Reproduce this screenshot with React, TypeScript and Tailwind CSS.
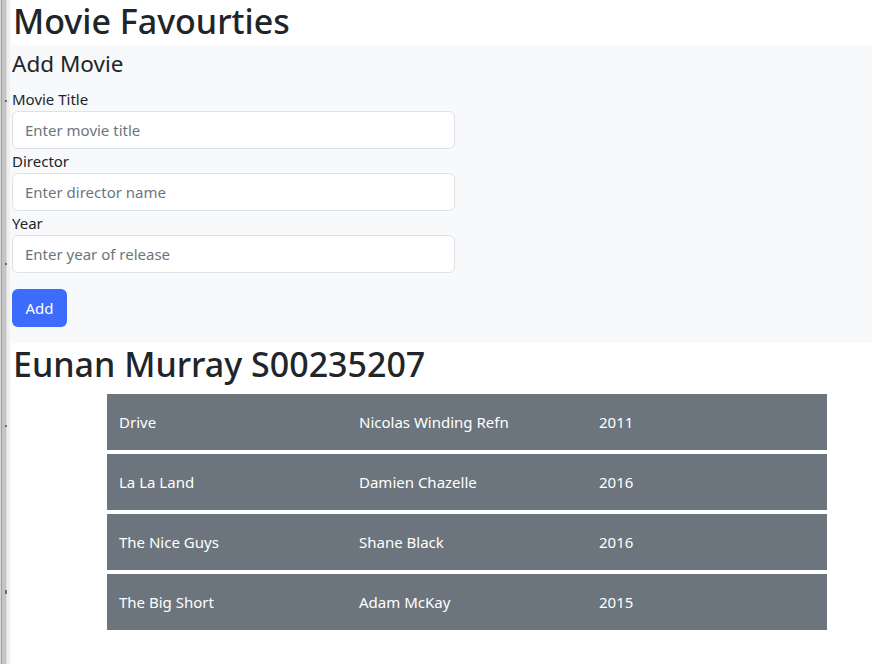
import React, { useState } from 'react';

interface Movie {
  title: string;
  director: string;
  year: string;
}

const movies: Movie[] = [
  { title: 'Drive', director: 'Nicolas Winding Refn', year: '2011' },
  { title: 'La La Land', director: 'Damien Chazelle', year: '2016' },
  { title: 'The Nice Guys', director: 'Shane Black', year: '2016' },
  { title: 'The Big Short', director: 'Adam McKay', year: '2015' },
];

const Field = ({ label, placeholder }: { label: string; placeholder: string }) => (
  <div>
    <label className="block text-[15px] leading-[24px] text-[#212529]">{label}</label>
    <input
      type="text"
      placeholder={placeholder}
      className="w-[443px] h-[38px] px-3 bg-white border border-[#dee2e6] rounded-[6px] text-[15px] text-[#212529] placeholder:text-[#6c757d] focus:outline-none"
    />
  </div>
);

const App = () => {
  const [list] = useState<Movie[]>(movies);

  return (
    <div className="flex min-h-[664px] bg-white text-[#212529] font-['Noto_Sans',sans-serif]">
      {/* window edge on the left */}
      <div className="relative w-[11px] shrink-0 flex">
        <div className="w-[1px] bg-[#d6d6d6]" />
        <div className="w-[1px] bg-[#a3a3a3]" />
        <div className="w-[4px] bg-[#c4c4c4]" />
        <div className="w-[1px] bg-[#dcdcdc]" />
        <div className="w-[3px] bg-[#efefef]" />
        <div className="w-[1px] bg-[#fafafa]" />
        <span className="absolute left-[5px] top-[100px] w-[2px] h-[2px] bg-[#6b6b6b]" />
        <span className="absolute left-[5px] top-[263px] w-[2px] h-[2px] bg-[#6b6b6b]" />
        <span className="absolute left-[5px] top-[425px] w-[2px] h-[2px] bg-[#6b6b6b]" />
        <span className="absolute left-[5px] top-[590px] w-[2px] h-[4px] bg-[#6b6b6b]" />
      </div>

      <div className="flex-1">
        <h1 className="pl-[2px] text-[34px] leading-[42px] font-medium mb-[3px]">Movie Favourties</h1>

        <div className="bg-[#f8f9fa] pt-[3px] pb-[16px] pl-[1px]">
          <h3 className="text-[22.5px] leading-[31px] mb-[8px]">Add Movie</h3>
          <Field label="Movie Title" placeholder="Enter movie title" />
          <Field label="Director" placeholder="Enter director name" />
          <Field label="Year" placeholder="Enter year of release" />
          <button className="mt-4 w-[55px] h-[38px] bg-[#3d6cfd] text-white text-[15px] rounded-[6px]">
            Add
          </button>
        </div>

        <h1 className="pl-[2px] text-[34px] leading-[42px] font-medium mb-[9px]">Eunan Murray S00235207</h1>

        <div className="ml-[96px] w-[720px] flex flex-col gap-[4px]">
          {list.map(m => (
            <div key={m.title} className="grid grid-cols-3 h-[56px] items-center bg-[#6c757d] text-white text-[15px]">
              <span className="px-3">{m.title}</span>
              <span className="px-3">{m.director}</span>
              <span className="px-3">{m.year}</span>
            </div>
          ))}
        </div>
      </div>
    </div>
  );
};

export default App;
